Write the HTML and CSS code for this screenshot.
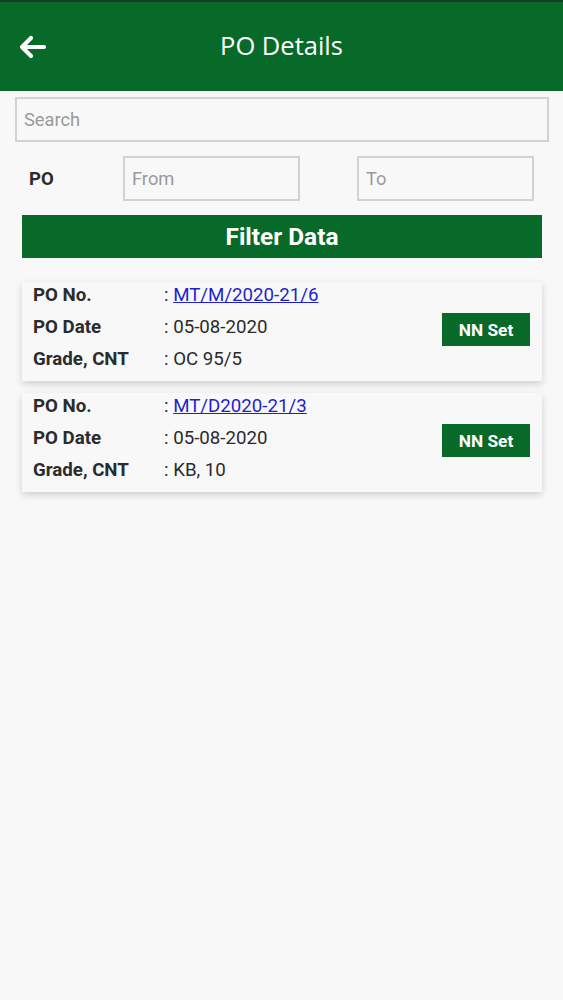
FILE: index.html
```html
<!DOCTYPE html>
<html lang="en">
<head>
  <meta charset="UTF-8" />
  <meta name="viewport" content="width=device-width, initial-scale=1.0"/>
  <title>PO Details</title>
  <link rel="stylesheet" href="styles.css">
</head>
<body>
  <header class="topbar">
    <a class="back" href="#">
      <svg width="28" height="24" viewBox="0 0 28 24">
        <path d="M12 3 L3 12 L12 21 M3.5 12 H25" fill="none" stroke="#fff" stroke-width="4.2" stroke-linecap="round" stroke-linejoin="round"/>
      </svg>
    </a>
    <h1>PO Details</h1>
  </header>

  <main>
    <input class="field search" type="text" placeholder="Search">

    <div class="range">
      <label>PO</label>
      <input class="field" type="text" placeholder="From">
      <input class="field" type="text" placeholder="To">
    </div>

    <button class="btn filter">Filter Data</button>

    <section class="card">
      <dl>
        <div class="row"><dt>PO No.</dt><dd>: <a href="#">MT/M/2020-21/6</a></dd></div>
        <div class="row"><dt>PO Date</dt><dd>: 05-08-2020</dd></div>
        <div class="row"><dt>Grade, CNT</dt><dd>: OC 95/5</dd></div>
      </dl>
      <button class="btn small">NN Set</button>
    </section>

    <section class="card">
      <dl>
        <div class="row"><dt>PO No.</dt><dd>: <a href="#">MT/D2020-21/3</a></dd></div>
        <div class="row"><dt>PO Date</dt><dd>: 05-08-2020</dd></div>
        <div class="row"><dt>Grade, CNT</dt><dd>: KB, 10</dd></div>
      </dl>
      <button class="btn small">NN Set</button>
    </section>
  </main>
</body>
</html>
```

FILE: styles.css
```css
:root {
  --green: #086a28;
  --text: #2b2b2b;
  --border: #d2d2d2;
  --background: #f8f8f8;
}

body {
  margin: 0;
  font-family: Roboto, sans-serif;
  background-color: var(--background);
  color: var(--text);
}

.topbar {
  height: 89px;
  box-sizing: content-box;
  background-color: var(--green);
  border-top: 2px solid #1e3a26;
  display: flex;
  align-items: center;
  justify-content: center;
  position: relative;
}

.topbar h1 {
  margin: 0 0 4px;
  font-family: 'Open Sans', sans-serif;
  font-weight: 400;
  font-size: 25.5px;
  color: white;
}

.back {
  position: absolute;
  left: 19px;
  top: 33px;
  display: flex;
}

main {
  padding: 6px 14px 0 15px;
}

.field {
  box-sizing: border-box;
  border: 2px solid var(--border);
  background-color: var(--background);
  font-family: Roboto, sans-serif;
  font-size: 18.3px;
  padding: 0 7px;
  color: var(--text);
  outline: none;
}

.field::placeholder {
  color: #9a9a9a;
}

.search {
  display: block;
  width: 100%;
  height: 45px;
}

.range {
  display: flex;
  align-items: center;
  margin-top: 14px;
  padding-right: 15px;
}

.range label {
  box-sizing: border-box;
  width: 108px;
  padding-left: 14px;
  font-weight: 700;
  font-size: 18.5px;
}

.range .field {
  width: 177px;
  height: 45px;
}

.range .field + .field {
  margin-left: auto;
}

.btn {
  background-color: var(--green);
  color: white;
  border: none;
  font-family: Roboto, sans-serif;
  font-weight: 700;
  cursor: pointer;
}

.filter {
  display: block;
  width: 520px;
  height: 43px;
  margin: 14px 0 24px 7px;
  font-size: 24.4px;
}

.card {
  width: 520px;
  margin: 0 0 12px 7px;
  padding: 0 12px 6px 11px;
  box-sizing: border-box;
  background-color: var(--background);
  box-shadow: 0 3px 7px rgba(0, 0, 0, 0.16);
  display: flex;
  align-items: center;
  justify-content: space-between;
}

.card dl {
  margin: -3px 0 0;
}

.row {
  display: flex;
  height: 32px;
  align-items: center;
  font-size: 18.7px;
}

.row dt {
  width: 131px;
  font-weight: 700;
}

.row dd {
  margin: 0;
}

.row a {
  color: #1f1fcf;
}

.small {
  width: 88px;
  height: 33px;
  font-size: 17.3px;
  margin-top: 2px;
}
```
